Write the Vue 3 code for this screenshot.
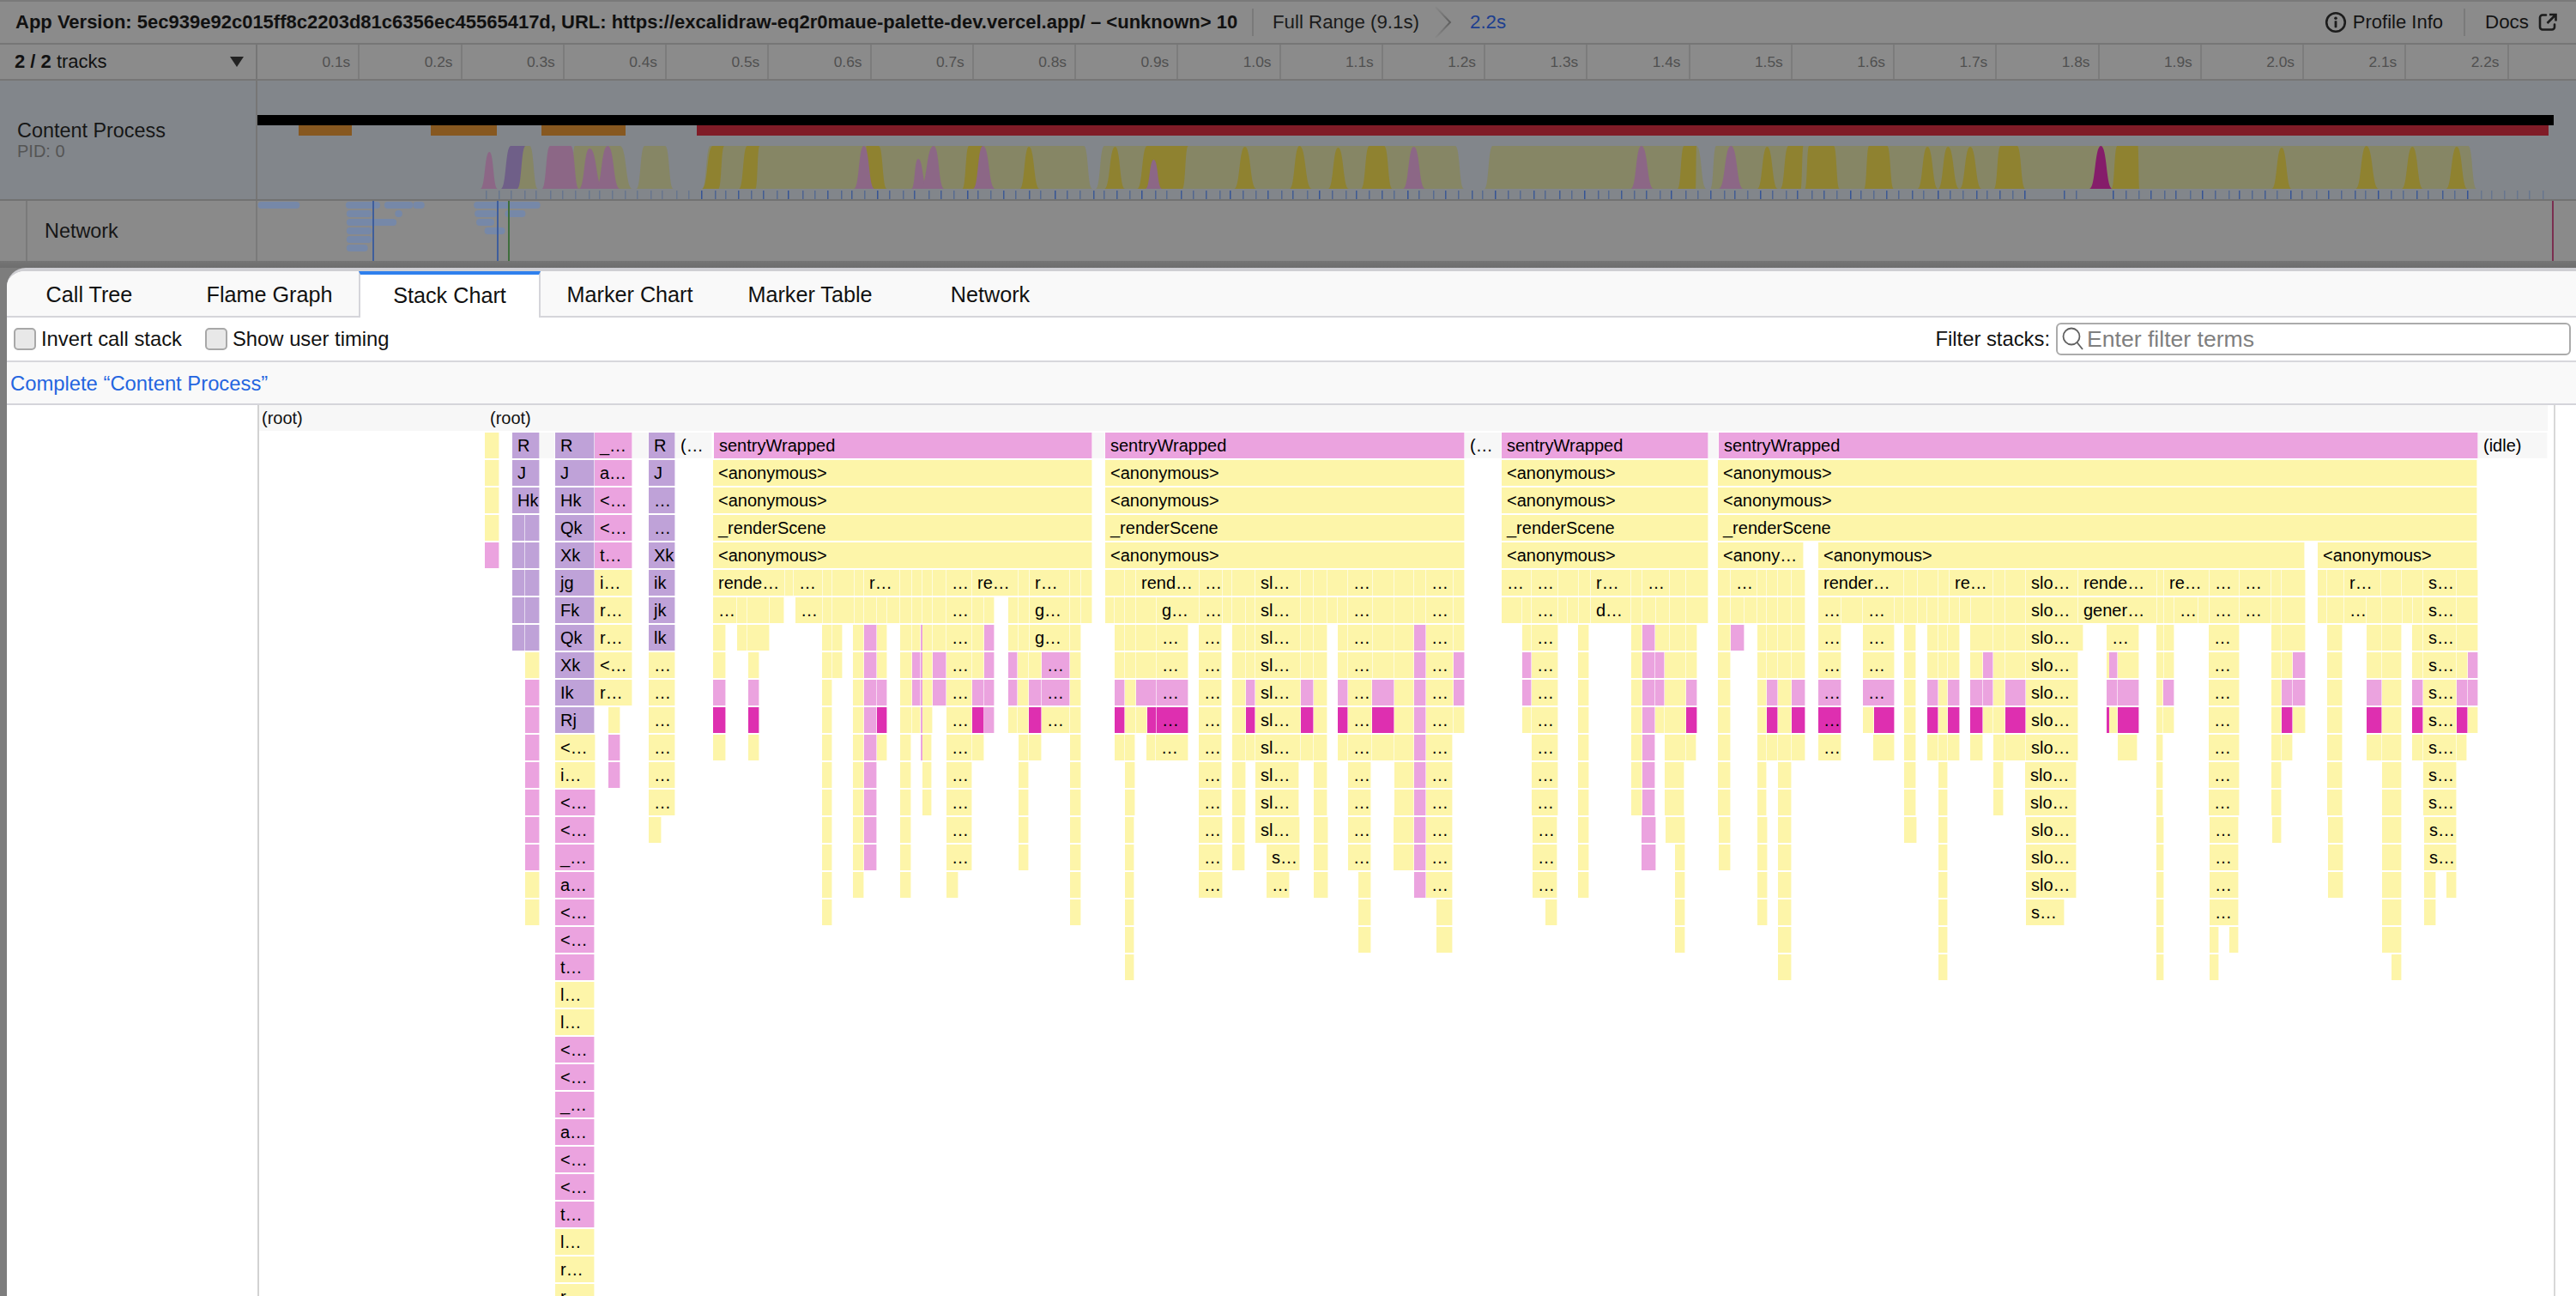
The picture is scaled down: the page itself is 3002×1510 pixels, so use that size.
<script setup>
const z1 = (x) => x / 1.045
const z2 = (x) => 1500 + x / 1.044

const ticksRuler = ['0.1s','0.2s','0.3s','0.4s','0.5s','0.6s','0.7s','0.8s','0.9s','1.0s','1.1s','1.2s','1.3s','1.4s','1.5s','1.6s','1.7s','1.8s','1.9s','2.0s','2.1s','2.2s']
const tabs = ['Call Tree','Flame Graph','Stack Chart','Marker Chart','Marker Table','Network']

/* ---------- activity graph ---------- */
const G = { l: '#868665', y: '#8f8230', p: '#8c6786', u: '#6f5f88', m: '#851d6a' }
const shape = (x1, x2, t1, t2, top = 170) => {
  const b = 126, t = top - 94, o = 300
  const a = x1 - o, c = x2 - o, d = t1 - o, e = t2 - o
  const lerp = (p, q, f) => (p + (q - p) * f).toFixed(1)
  return `M${a} ${b}C${lerp(a, d, 0.55)} ${b} ${lerp(a, d, 0.45)} ${t} ${d} ${t}L${e} ${t}C${lerp(c, e, 0.45)} ${t} ${lerp(c, e, 0.55)} ${b} ${c} ${b}Z`
}
const one = (f, c, a, b, p, q, top) => ({ fill: G[c], d: shape(f(a), f(b), f(p), f(q), top) })
const hills = [
  one(z1,'l',630,655,637,645), one(z1,'l',695,770,700,755), one(z1,'l',775,820,785,810), one(z1,'l',855,1330,865,1320),
  { fill: G.l, d: shape(1277, 1706, 1287, 1696) },
  one(z2,'l',240,510,250,498), one(z2,'l',515,1447,522,1437),
  one(z1,'p',585,606,596,596,177), one(z1,'u',610,630,622,640), one(z1,'p',660,705,670,695),
  one(z1,'p',705,735,718,718,173), one(z1,'p',725,755,740,740),
  one(z1,'y',855,875,868,882), one(z1,'y',900,920,910,925),
  one(z1,'y',1055,1080,1055,1070), one(z1,'p',1040,1065,1052,1052),
  one(z1,'p',1110,1130,1118,1118,185), one(z1,'p',1120,1150,1137,1137),
  one(z1,'y',1172,1195,1180,1197), one(z1,'p',1185,1212,1197,1197),
  one(z1,'y',1242,1266,1253,1253,171), one(z1,'y',1345,1370,1358,1358,171),
  one(z1,'y',1385,1440,1397,1447), one(z1,'p',1395,1415,1405,1405,186), one(z1,'y',1503,1530,1516,1516,171),
  one(z2,'y',3,30,15,15), one(z2,'y',50,75,62,62,172), one(z2,'y',90,128,100,118), one(z2,'p',141,168,154,154,171),
  one(z2,'p',418,446,431,431), one(z2,'y',475,497,483,498),
  one(z2,'p',525,555,540,540), one(z2,'y',572,597,584,584,171), one(z2,'y',600,625,610,628), one(z2,'y',630,672,635,665),
  one(z2,'y',702,738,708,730), one(z2,'y',767,792,779,779,171), one(z2,'y',792,818,804,804,171), one(z2,'y',818,845,831,831,171),
  one(z2,'y',860,898,868,888), one(z2,'m',976,1004,990,990), one(z2,'y',1003,1037,1010,1035),
  one(z2,'y',1198,1222,1210,1210,172), one(z2,'y',1300,1328,1313,1313), one(z2,'y',1356,1382,1369,1369,171), one(z2,'y',1410,1436,1423,1423,171),
]
const ticks = []
{
  const steps = [15, 14, 16, 13, 17, 14, 15, 16, 12, 15]
  let x = 566, i = 0
  while (x < 2968) {
    const gap = (x > 2362 && x < 2405) || (x > 2429 && x < 2453)
    if (!gap) {
      const faint = x < 812 || x > 2880
      ticks.push({ x: x - 300, o: faint ? 0.3 : [0.55, 0.75, 0.5, 0.9, 0.6, 0.5, 0.8][i % 7] })
    }
    x += steps[i % 10]
    i++
  }
}
const orange = [[348, 410], [502, 579], [631, 729]]

/* ---------- network track ---------- */
const netRows = [
  [[314,365],[421,463],[468,503],[503,517],[577,658]],
  [[422,453],[481,490],[578,605],[615,640]],
  [[422,483],[580,602]],
  [[422,453],[590,615]],
  [[422,453]],
  [[422,448]],
]
const netBars = netRows.flatMap((r, i) => r.map(([a, b]) => ({ x: z1(a) - 300, w: z1(b) - z1(a), y: 1 + i * 10 })))

/* ---------- stack chart ---------- */
const A = { o: 280, s: 1.568 }, B = { o: 1270, s: 1.568 }, D = { o: 2000, s: 1.565 }, Z = { o: 1270, s: 0.905 }, P = { o: 0, s: 1 }
const an = '<anonymous>'
const specs = [
  [P, {
    1: `565-582 u597-629:R g629-647 u647-693:R p693-737:_… g737-756 u756-787:R g787-830:(… p832-1273:sentryWrapped g1273-1288 p1288-1707:sentryWrapped g1707-1750:(… p1750-1991:sentryWrapped g1991-2003 p2003-2888:sentryWrapped g2888-2969:(idle)`,
    2: `565-582 u597-629:J u647-693:J p693-737:a… u756-787:J 831-1273:${an} 1288-1707:${an} 1750-1991:${an} 2002-2887:${an}`,
    3: `565-582 u597-629:Hk u647-693:Hk p693-737:<… u756-787:… 831-1273:${an} 1288-1707:${an} 1750-1991:${an} 2002-2887:${an}`,
    4: `565-582 u597-612 u612-629 u647-693:Qk p693-737:<… u756-787:… 831-1273:_renderScene 1288-1707:_renderScene 1750-1991:_renderScene 2002-2887:_renderScene`,
    5: `p565-582 u597-612 u612-629 u647-693:Xk p693-737:t… u756-787:Xk 831-1273:${an} 1288-1707:${an} 1750-1991:${an} 2002-2102:<anony… 2119-2686:${an} 2701-2887:${an}`,
    6: 'u597-612 u612-629 u647-693:jg 693-737:i… u756-787:ik',
    7: 'u597-612 u612-629 u647-693:Fk 693-737:r… u756-787:jk',
    8: 'u597-612 u612-629 u647-693:Qk 693-737:r… u756-787:lk',
    9: '612-629 u647-693:Xk 693-737:<… 756-787:…',
    10: 'p612-629 u647-693:Ik 693-737:r… 756-787:…',
    11: 'p612-629 u647-693:Rj 709-723 756-787:…',
    12: 'p612-629 647-694:<… p709-723 756-787:…',
    13: 'p612-629 647-694:i… p709-723 756-787:…',
    14: 'p612-629 p647-694:<… 756-787:…',
    15: 'p612-629 p647-693:<… 756-771',
    16: 'p612-629 p647-693:_…',
    17: '612-629 p647-693:a…',
    18: '612-629 p647-693:<…',
    19: 'p647-693:<…', 20: 'p647-693:t…', 21: '647-693:l…', 22: '647-693:l…', 23: 'p647-693:<…', 24: 'p647-693:<…',
    25: 'p647-693:_…', 26: 'p647-693:a…', 27: 'p647-693:<…', 28: 'p647-693:<…', 29: 'p647-693:t…', 30: '647-693:l…', 31: '647-693:r…', 32: '647-693:r…',
  }],
  [A, {
    6: '864-996:rende… 996-1012 1012-1065:… 1065-1082 1082-1122 1122-1140 1140-1206:r… 1206-1228 1228-1247 1247-1266 1266-1290 1290-1337:… 1337-1422:re… 1422-1442 1442-1517:r… 1517-1537 1537-1557',
    7: '864-908:… 908-926 926-968 968-994 1014-1065:… 1065-1082 1082-1122 1122-1140 1140-1164 1164-1183 1183-1206 1206-1228 1228-1247 1247-1266 1266-1290 1290-1337:… 1337-1360 1360-1378 1403-1422 1422-1442 1442-1517:g… 1517-1537 1537-1557',
    8: '864-887 908-926 926-968 1063-1082 1082-1101 1120-1140 p1140-1164 1164-1183 1206-1228 1228-1243 p1243-1247 1247-1266 1266-1290 1290-1337:… 1337-1360 p1360-1378 1403-1422 1422-1442 1442-1517:g… 1517-1537',
    9: '864-887 928-949 1063-1082 1082-1101 1120-1140 p1140-1164 1164-1183 1206-1228 p1228-1243 p1243-1247 1247-1266 p1266-1290 1290-1337:… 1337-1360 p1360-1378 p1403-1421 1421-1441 1441-1465 p1465-1517:… 1517-1537',
    10: 'p864-887 p928-949 1063-1082 1120-1140 p1140-1164 p1164-1183 1206-1228 p1228-1243 p1243-1247 1247-1266 p1266-1290 1290-1337:… p1337-1360 p1360-1378 p1403-1421 1421-1441 p1441-1465 p1465-1517:… 1517-1537',
    11: 'm864-887 m928-949 1063-1082 1120-1140 p1140-1164 m1164-1183 1206-1228 1228-1243 p1243-1247 1247-1266 1290-1337:… m1337-1360 p1360-1378 1403-1421 1421-1441 m1441-1465 1465-1517:… 1517-1537',
    12: '864-887 928-949 1063-1082 1120-1140 p1140-1164 1164-1183 1206-1226 p1243-1247 1247-1264 1290-1337:… 1337-1360 1422-1441 1441-1465 1517-1537',
    13: '1063-1082 1120-1140 p1140-1164 1206-1226 1247-1264 1290-1337:… 1422-1441 1517-1537',
    14: '1063-1082 1120-1140 p1140-1164 1206-1226 1247-1264 1290-1337:… 1422-1441 1517-1537',
    15: '1063-1082 1120-1140 p1140-1164 1206-1226 1290-1337:… 1422-1441 1517-1537',
    16: '1063-1082 1120-1140 p1140-1164 1206-1226 1290-1337:… 1422-1441 1517-1537',
    17: '1063-1082 1120-1140 1206-1226 1290-1312 1517-1537',
    18: '1063-1082 1517-1537',
  }],
  [B, {
    6: '28-65 65-85 85-200:rend… 200-243:… 243-260 260-303 303-385:sl… 385-410 410-435 435-472 472-518:… 518-556 556-593 593-615 615-665:… 665-685 753-808:… 808-856:… 856-893 893-915 915-990:r… 990-1010 1010-1060:… 1060-1090 1090-1130',
    7: '28-45 45-65 65-85 85-122 122-200:g… 200-243:… 243-260 260-285 285-303 303-385:sl… 385-410 410-435 435-453 453-472 472-518:… 518-556 556-593 593-615 615-665:… 665-685 753-790 790-808 808-856:… 856-873 873-893 893-915 915-990:d… 990-1010 1010-1035 1035-1060 1060-1090 1090-1130',
    8: '45-65 65-85 85-122 122-181:… 199-242:… 260-285 285-303 303-385:sl… 385-410 410-435 453-472 472-518:… 518-556 556-593 p593-615 615-665:… 665-685 790-808 808-856:… 892-913 989-1010 p1010-1033 1033-1060 1060-1090 1090-1110',
    9: '45-65 65-85 85-122 122-181:… 199-242:… 260-285 285-303 303-385:sl… 385-410 410-435 453-472 472-518:… 518-556 556-593 p593-615 615-665:… p665-685 p790-808 808-856:… 892-913 989-1010 p1010-1033 p1033-1051 1051-1090 1090-1110',
    10: 'p45-65 65-85 p85-122 p122-181:… 199-242:… 260-285 p285-303 303-385:sl… p385-410 410-435 p453-472 472-516:… p516-556 556-593 p593-615 615-665:… p665-685 p790-808 808-856:… 892-913 989-1010 p1010-1033 p1033-1051 1051-1090 p1090-1110',
    11: 'm45-65 65-85 85-105 m105-122 m122-181:… 199-242:… 260-285 m285-303 303-385:sl… m385-410 410-435 m453-472 472-516:… m516-556 556-593 p593-615 615-665:… 665-685 790-808 808-856:… 892-913 989-1010 p1010-1033 1033-1051 1051-1090 m1090-1110',
    12: '45-65 65-83 103-120 120-180:… 199-242:… 260-285 285-303 303-385:sl… 385-410 410-435 453-472 472-516:… 516-556 556-593 p593-615 615-663:… 808-856:… 892-913 989-1010 p1010-1033 1051-1090 1090-1108',
    13: '64-83 199-242:… 260-285 303-383:sl… 410-435 472-515:… 556-593 p593-615 615-663:… 808-856:… 892-913 989-1010 p1010-1033 1051-1087',
    14: '64-83 199-242:… 260-285 303-383:sl… 410-435 472-515:… 556-593 p593-615 615-663:… 808-856:… 892-913 989-1010 p1010-1033 1051-1087',
  }],
  [D, {
    6: '3-27 27-75:… 75-93 93-113 113-137 137-162 186-343:render… 343-367 367-405 405-425 425-505:re… 505-527 527-565 565-660:slo… 660-805:rende… 805-817 817-900:re… 900-955:… 955-1013:… 1013-1032 1032-1075 1097-1115 1115-1145 1145-1213:r… 1213-1250 1250-1290 1290-1351:s… 1351-1390',
    7: '3-27 27-51 51-75 75-93 93-113 113-137 137-162 186-229:… 229-267 267-325:… 325-343 343-367 367-385 385-405 405-425 425-445 445-465 465-505 505-527 527-565 565-660:slo… 660-805:gener… 805-817 817-835 835-880:… 880-900 900-955:… 955-1013:… 1013-1032 1032-1075 1097-1115 1115-1145 1145-1187:… 1187-1215 1215-1252 1252-1270 1270-1290 1290-1351:s… 1351-1390',
    8: '3-27 p27-51 75-93 93-113 113-137 137-162 186-229:… 267-325:… 343-365 385-405 405-423 423-445 463-505 505-527 527-565 565-670:slo… 712-771:… 803-817 817-835 898-954:… 1012-1032 1032-1075 1115-1143 1186-1214 1214-1251 1269-1290 1290-1351:s… 1351-1390',
    9: '3-27 75-93 93-113 113-137 137-162 186-229:… 267-325:… 343-365 385-405 405-423 423-445 463-487 p487-505 505-527 527-565 565-660:slo… 712-718 p717-733 733-771 803-817 817-835 898-954:… 1012-1032 1032-1051 p1051-1075 1115-1143 1186-1214 1214-1251 1269-1290 1290-1351:s… 1351-1371 p1371-1390',
    10: '3-27 75-93 p93-113 113-137 p137-162 p186-229:… p267-325:… 343-365 p385-405 405-423 p423-445 p463-487 p487-505 505-527 p527-565 565-660:slo… p712-733 p733-771 803-815 p815-835 898-954:… 1012-1032 p1032-1051 p1051-1075 1115-1143 p1186-1214 1214-1251 p1269-1290 1290-1351:s… p1351-1371 p1371-1390',
    11: '3-27 75-93 m93-113 113-137 m137-162 m186-229:… 267-288 m288-325 343-365 m385-405 405-423 m423-445 m463-487 487-505 505-527 m527-565 565-660:slo… m712-717 717-733 m733-771 803-815 815-835 898-954:… 1012-1032 m1032-1051 1051-1075 1115-1143 m1186-1214 1214-1251 m1269-1290 1290-1351:s… m1351-1371 1371-1390',
    12: '3-27 75-93 93-113 113-137 137-162 186-229:… 286-325 343-365 385-405 405-423 423-445 463-487 505-527 527-565 565-660:slo… 733-769 803-815 898-954:… 1012-1032 1032-1051 1115-1143 1186-1214 1214-1251 1269-1290 1290-1351:s… 1351-1370',
    13: '3-27 75-93 113-137 343-365 405-423 505-525 563-658:slo… 803-815 898-954:… 1012-1032 1115-1143 1214-1251 1289-1351:s…',
    14: '3-27 75-93 113-137 343-365 405-423 505-525 563-658:slo… 803-815 898-954:… 1012-1032 1115-1143 1214-1251 1289-1351:s…',
  }],
  [Z, {
    15: '37-47 115-140:… 150-164 175-222:sl… 236-252 272-297:… 320-342 p342-355 355-383:… 467-493:… 515-527 p582-597 607-628 663-676 704-715 726-740 859-872 895-905 987-1041:slo… 1125-1133 1181-1212:… 1247-1257 1306-1322 1363-1384 1407-1442:s…',
    16: '37-47 115-140:… 150-164 186-222:s… 236-252 272-297:… 320-342 p342-355 355-383:… 467-493:… 515-527 p582-597 617-628 663-676 704-715 726-740 895-905 987-1041:slo… 1125-1133 1181-1212:… 1306-1322 1363-1384 1407-1442:s…',
    17: '37-47 115-140:… 186-211:… 236-252 283-297 p342-355 355-383:… 467-493:… 515-527 617-628 704-715 726-740 895-905 987-1041:slo… 1125-1133 1181-1212:… 1306-1322 1363-1384 1407-1420 1431-1442',
    18: '37-47 283-297 366-383 481-493 617-628 704-715 726-740 895-905 987-1028:s… 1125-1133 1181-1212:… 1363-1384 1407-1420',
    19: '37-47 283-297 366-383 617-628 726-740 895-905 1125-1133 1181-1191 1202-1212 1363-1384',
    20: '37-47 726-740 895-905 1125-1133 1181-1191 1373-1384',
  }],
]
const boxes = []
const re = /^([pmug]?)(\d+)-(\d+)(?::(.*))?$/
for (const [g, rows] of specs) {
  for (const k of Object.keys(rows)) {
    for (const tok of rows[k].split(' ')) {
      const m = tok.match(re)
      if (!m) continue
      const a = Math.round(g.o + +m[2] / g.s), b = Math.round(g.o + +m[3] / g.s)
      boxes.push({ c: m[1] || 'y', l: a - 8, w: Math.max(b - a, 2), t: 504 + 32 * (k - 1) - 472, text: m[4] || '' })
    }
  }
}
</script>

<template>
  <div class="app">
    <header class="topbar">
      <div class="appinfo">App Version: 5ec939e92c015ff8c2203d81c6356ec45565417d, URL: https://excalidraw-eq2r0maue-palette-dev.vercel.app/ – &lt;unknown&gt; 10</div>
      <div class="sep"></div>
      <div class="crumb">Full Range (9.1s)</div>
      <svg class="chev" width="22" height="38" viewBox="0 0 22 38">
        <defs>
          <linearGradient id="chevg" x1="0" y1="0" x2="0" y2="1">
            <stop offset="0" stop-color="#6a6a6a" stop-opacity="0.1" />
            <stop offset="0.5" stop-color="#5e5e5e" />
            <stop offset="1" stop-color="#6a6a6a" stop-opacity="0.1" />
          </linearGradient>
        </defs>
        <path d="M2 1 L19 19 L2 37" fill="none" stroke="url(#chevg)" stroke-width="2" />
      </svg>
      <div class="crumb current">2.2s</div>
      <div class="grow"></div>
      <svg class="info" width="26" height="26" viewBox="0 0 26 26">
        <circle cx="13" cy="13" r="10.8" fill="none" stroke="#1c1c1c" stroke-width="2.6" />
        <circle cx="13" cy="8.2" r="1.8" fill="#1c1c1c" />
        <rect x="11.6" y="11.2" width="2.8" height="8" rx="0.6" fill="#1c1c1c" />
      </svg>
      <div class="right-item">Profile Info</div>
      <div class="sep right-sep"></div>
      <div class="right-item docs">Docs</div>
      <svg class="ext" width="22" height="22" viewBox="0 0 22 22">
        <path d="M9 2.5H5a3 3 0 0 0-3 3v11a3 3 0 0 0 3 3h11a3 3 0 0 0 3-3v-3" fill="none" stroke="#1c1c1c" stroke-width="2.6" stroke-linecap="round" />
        <path d="M13 2h7.5v7.5M20 2.500 10.500 12" fill="none" stroke="#1c1c1c" stroke-width="2.6" />
      </svg>
    </header>

    <div class="ruler-row">
      <div class="tracks-btn"><span><b>2 / 2</b> tracks</span><i class="caret"></i></div>
      <div class="tick" v-for="t in ticksRuler" :key="t">{{ t }}</div>
    </div>

    <div class="track">
      <div class="track-label">
        <div class="tl-name">Content Process</div>
        <div class="tl-pid">PID: 0</div>
      </div>
      <svg class="graph" width="2676" height="138" viewBox="0 0 2676 138">
        <rect x="0" y="40" width="2676" height="12" fill="#000" />
        <rect x="512" y="52" width="2158" height="12" fill="#801c27" />
        <rect v-for="o in orange" :key="o[0]" :x="o[0] - 300" y="52" :width="o[1] - o[0]" height="12" fill="#875820" />
        <path v-for="(h, i) in hills" :key="i" :d="h.d" :fill="h.fill" />
        <rect v-for="t in ticks" :key="t.x" :x="t.x" y="128" width="1.5" height="10" fill="#2c4f96" :opacity="t.o" />
      </svg>
    </div>

    <div class="network">
      <div class="net-label">Network</div>
      <svg class="net-graph" width="2676" height="70" viewBox="0 0 2676 70">
        <rect v-for="(b, i) in netBars" :key="i" :x="b.x" :y="b.y" :width="b.w" height="8" rx="4" fill="#7688a8" />
        <rect x="134" y="0" width="2" height="70" fill="#3f5e9c" />
        <rect x="279" y="0" width="2" height="70" fill="#3f5e9c" />
        <rect x="292" y="0" width="2" height="70" fill="#3f6e3c" />
        <rect x="2674" y="0" width="2" height="70" fill="#7b2f50" />
      </svg>
    </div>
    <div class="shade"></div>

    <section class="panel">
      <nav class="tabs">
        <div v-for="(t, i) in tabs" :key="t" class="tab" :class="{ active: i === 2 }">{{ t }}</div>
      </nav>
      <div class="settings">
        <label class="check"><span class="box"></span>Invert call stack</label>
        <label class="check"><span class="box"></span>Show user timing</label>
        <div class="grow"></div>
        <span class="filter-label">Filter stacks:</span>
        <div class="search">
          <svg width="28" height="30" viewBox="0 0 28 30">
            <circle cx="12" cy="12" r="9.500" fill="none" stroke="#606060" stroke-width="1.800" />
            <path d="M18.500 19 L25 27" stroke="#606060" stroke-width="1.800" fill="none" />
          </svg>
          <span class="placeholder">Enter filter terms</span>
        </div>
      </div>
      <div class="breadcrumb"><span>Complete “Content Process”</span></div>
      <div class="chart">
        <div class="gutter"></div>
        <div class="root-row">
          <span class="root-a">(root)</span>
          <span class="root-b">(root)</span>
        </div>
        <div
          v-for="(b, i) in boxes"
          :key="i"
          class="fbox"
          :class="'c-' + b.c"
          :style="{ left: b.l + 'px', top: b.t + 'px', width: b.w + 'px' }"
        >{{ b.text }}</div>
        <div class="edge"></div>
      </div>
    </section>
  </div>
</template>

<style>
html, body { margin: 0; padding: 0; background: #7d7d7d; }
</style>

<style scoped>
.app {
  width: 3002px;
  height: 1510px;
  overflow: hidden;
  display: flex;
  flex-direction: column;
  background: #7d7d7d;
  font-family: "Liberation Sans", Arial, sans-serif;
  color: #111;
}
.topbar {
  height: 48px;
  flex: none;
  border-top: 2px solid #7a7a7a;
  border-bottom: 2px solid #767676;
  background: #8b8b8b;
  display: flex;
  align-items: center;
  padding-left: 18px;
  padding-right: 22px;
  white-space: nowrap;
}
.appinfo { font-size: 22px; font-weight: 700; color: #111; width: 1424px; overflow: hidden; }
.sep { width: 2px; height: 32px; background: #7a7a7a; margin: 0 22px 0 17px; flex: none; }
.crumb { font-size: 22.3px; color: #1b1b1b; }
.crumb.current { color: #1d3f8f; }
.chev { margin: 0 20px 0 17px; flex: none; }
.grow { flex: 1; }
.info { margin-right: 7px; flex: none; }
.right-item { font-size: 22px; color: #141414; }
.right-item.docs { font-size: 22.4px; }
.right-sep { margin: 0 23px 0 24px; }
.ext { margin-left: 11px; flex: none; }
.ruler-row {
  height: 40px;
  flex: none;
  display: flex;
  background: #8b8b8b;
  border-bottom: 2px solid #767676;
}
.tracks-btn {
  width: 298px;
  flex: none;
  border-right: 2px solid #767676;
  box-sizing: content-box;
  display: flex;
  align-items: center;
  justify-content: space-between;
  padding: 0;
  font-size: 22px;
  color: #111;
}
.tracks-btn span { padding-left: 17px; }
.tracks-btn b { font-weight: 700; }
.caret {
  width: 0; height: 0;
  border-left: 8px solid transparent;
  border-right: 8px solid transparent;
  border-top: 12px solid #222;
  margin-right: 14px;
}
.tick {
  width: 119.25px;
  flex: none;
  box-sizing: border-box;
  text-align: right;
  padding-right: 9px;
  border-right: 2px solid #7c7c7c;
  font-size: 17.4px;
  line-height: 40px;
  color: #505050;
}
.track {
  height: 138px;
  flex: none;
  display: flex;
  background: #82868b;
  border-bottom: 2px solid #727272;
}
.track-label {
  flex: none;
  border-right: 2px solid #767676;
  box-sizing: border-box;
  width: 300px;
  padding-top: 44px;
  height: 138px;
  text-indent: 20px;
}
.tl-name { font-size: 23.4px; line-height: 28px; color: #161616; }
.tl-pid { font-size: 20px; line-height: 22px; margin-top: -1px; color: #555; }
.graph { display: block; flex: none; }
.network {
  height: 70px;
  flex: none;
  display: flex;
  background: #8a8a8a;
}
.net-label {
  width: 246px;
  margin-left: 30px;
  padding-left: 20px;
  border-left: 2px solid #7a7a7a;
  border-right: 2px solid #7a7a7a;
  box-sizing: content-box;
  flex: none;
  font-size: 23.4px;
  line-height: 70px;
  color: #161616;
}
.net-graph { display: block; flex: none; }
.shade { height: 8px; flex: none; background: linear-gradient(#757575, #6e6e6e); }
.panel {
  flex: 1;
  min-height: 0;
  margin-left: 8px;
  border-top: 4px solid #cfcfd3;
  border-top-left-radius: 22px;
  background: #fff;
  display: flex;
  flex-direction: column;
  overflow: hidden;
}
.tabs {
  height: 52px;
  flex: none;
  display: flex;
  background: #f9f9f9;
  border-bottom: 2px solid #d5d5da;
  margin-left: -9px;
}
.tab {
  width: 210px;
  flex: none;
  box-sizing: border-box;
  text-align: center;
  font-size: 25.2px;
  line-height: 54px;
  color: #111;
}
.tab.active {
  position: relative;
  background: #fff;
  width: 212px;
  margin: 0 -1px;
  height: 54px;
  border-top: 4px solid #2f80ed;
  border-left: 2px solid #d5d5da;
  border-right: 2px solid #d5d5da;
  line-height: 48px;
}
.settings {
  height: 50px;
  flex: none;
  display: flex;
  align-items: center;
  background: #fff;
  border-bottom: 2px solid #d8d8dc;
  padding-right: 6px;
  padding-left: 8px;
  font-size: 23.8px;
}
.check { display: flex; align-items: center; margin-right: 27px; color: #111; }
.box {
  width: 26px;
  height: 26px;
  box-sizing: border-box;
  background: #e8e8e8;
  border: 2px solid #a8a8a8;
  border-radius: 5px;
  margin-right: 6px;
  flex: none;
}
.filter-label { color: #111; margin-right: 7px; }
.search {
  width: 600px;
  height: 38px;
  box-sizing: border-box;
  border: 2px solid #ababab;
  border-radius: 6px;
  display: flex;
  align-items: center;
  padding-left: 4px;
  background: #fff;
}
.search svg { flex: none; margin-right: 2px; }
.placeholder { font-size: 26.6px; color: #7f7f7f; }
.breadcrumb {
  height: 48px;
  flex: none;
  background: #f9f9f9;
  border-bottom: 2px solid #d5d5da;
  font-size: 23.8px;
  line-height: 50px;
  color: #2465e0;
  padding-left: 4px;
}
.chart {
  flex: 1;
  min-height: 0;
  position: relative;
  background: #fff;
}
.gutter {
  position: absolute;
  left: 292px;
  top: 0;
  bottom: 0;
  width: 2px;
  background: #d2d2d2;
}
.edge {
  position: absolute;
  left: 2968px;
  top: 0;
  bottom: 0;
  width: 2px;
  background: #d8d8d8;
}
.root-row {
  position: absolute;
  left: 294px;
  top: 0;
  width: 2667px;
  height: 30px;
  background: #f7f7f7;
  font-size: 20px;
  line-height: 30px;
  color: #111;
}
.root-a { position: absolute; left: 3px; }
.root-b { position: absolute; left: 269px; }
.fbox {
  position: absolute;
  height: 30px;
  box-sizing: border-box;
  overflow: hidden;
  white-space: nowrap;
  padding-left: 6px;
  font-size: 20px;
  line-height: 30px;
  color: #000;
  box-shadow: inset -1px 0 0 rgba(255, 255, 255, 0.6);
}
.c-y { background: #fdf5a9; }
.c-p { background: #eba3df; }
.c-u { background: #bfa2d8; }
.c-m { background: #de2fb0; }
.c-g { background: #f7f7f7; }
</style>
